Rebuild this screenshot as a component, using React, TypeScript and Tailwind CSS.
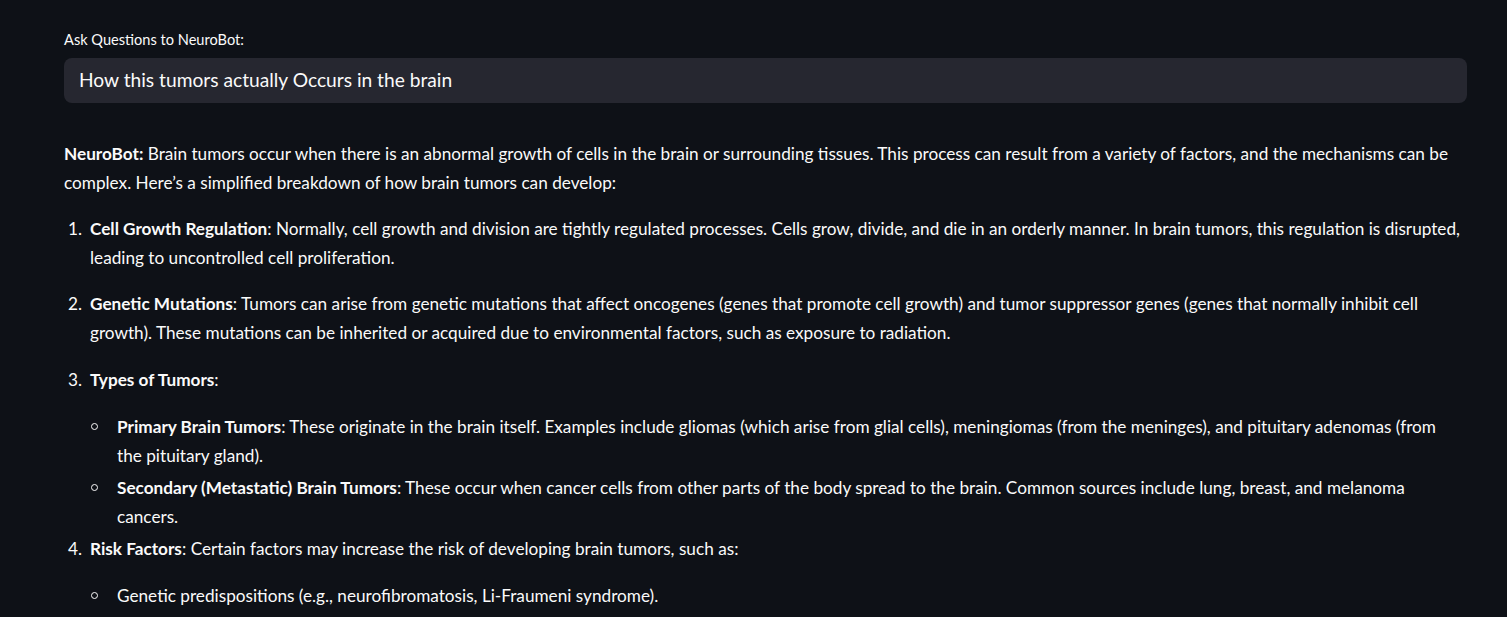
import React from "react";

const font = { fontFamily: "Lato, 'Liberation Sans', sans-serif" };

function Num({ n, children, className = "" }: { n: number; children: React.ReactNode; className?: string }) {
  return (
    <div className={"flex " + className}>
      <div className="w-[26px] shrink-0 pl-[4px]">{n}.</div>
      <div className="min-w-0">{children}</div>
    </div>
  );
}

function Bullet({ children, className = "" }: { children: React.ReactNode; className?: string }) {
  return (
    <div className={"flex " + className}>
      <div className="w-[27px] shrink-0 h-[29px] flex items-center pl-[1px]">
        <span className="block w-[7px] h-[7px] rounded-full border-[1.5px] border-[#fafafa]" />
      </div>
      <div className="min-w-0">{children}</div>
    </div>
  );
}

export default function App() {
  return (
    <div
      className="h-[617px] overflow-hidden bg-[#0e1117] text-[#fafafa] pl-[64px] pr-[40px] pt-[30px]"
      style={font}
    >
      <div className="text-[14.6px] leading-[20px] h-[20px] mb-[8px]">Ask Questions to NeuroBot:</div>
      <div className="h-[45px] w-full rounded-[8px] bg-[#262730] px-[15px] flex items-center text-[19.2px]">
        How this tumors actually Occurs in the brain
      </div>

      <div className="mt-[36px] text-[17.2px] leading-[29px] whitespace-nowrap">
        <p className="mb-[17px]">
          <b className="font-bold">NeuroBot:</b> Brain tumors occur when there is an abnormal growth of cells in the brain or surrounding tissues. This process can result from a variety of factors, and the mechanisms can be
          <br />
          complex. Here’s a simplified breakdown of how brain tumors can develop:
        </p>

        <Num n={1} className="mb-[17px]">
          <b className="font-bold">Cell Growth Regulation</b>: Normally, cell growth and division are tightly regulated processes. Cells grow, divide, and die in an orderly manner. In brain tumors, this regulation is disrupted,
          <br />
          leading to uncontrolled cell proliferation.
        </Num>
        <Num n={2} className="mb-[18px]">
          <b className="font-bold">Genetic Mutations</b>: Tumors can arise from genetic mutations that affect oncogenes (genes that promote cell growth) and tumor suppressor genes (genes that normally inhibit cell
          <br />
          growth). These mutations can be inherited or acquired due to environmental factors, such as exposure to radiation.
        </Num>
        <Num n={3} className="mb-[3px]">
          <p className="mb-[18px]">
            <b className="font-bold">Types of Tumors</b>:
          </p>
          <Bullet className="mb-[3px]">
            <b className="font-bold">Primary Brain Tumors</b>: These originate in the brain itself. Examples include gliomas (which arise from glial cells), meningiomas (from the meninges), and pituitary adenomas (from
            <br />
            the pituitary gland).
          </Bullet>
          <Bullet>
            <b className="font-bold">Secondary (Metastatic) Brain Tumors</b>: These occur when cancer cells from other parts of the body spread to the brain. Common sources include lung, breast, and melanoma
            <br />
            cancers.
          </Bullet>
        </Num>
        <Num n={4}>
          <p className="mb-[18px]">
            <b className="font-bold">Risk Factors</b>: Certain factors may increase the risk of developing brain tumors, such as:
          </p>
          <Bullet>Genetic predispositions (e.g., neurofibromatosis, Li-Fraumeni syndrome).</Bullet>
        </Num>
      </div>
    </div>
  );
}
